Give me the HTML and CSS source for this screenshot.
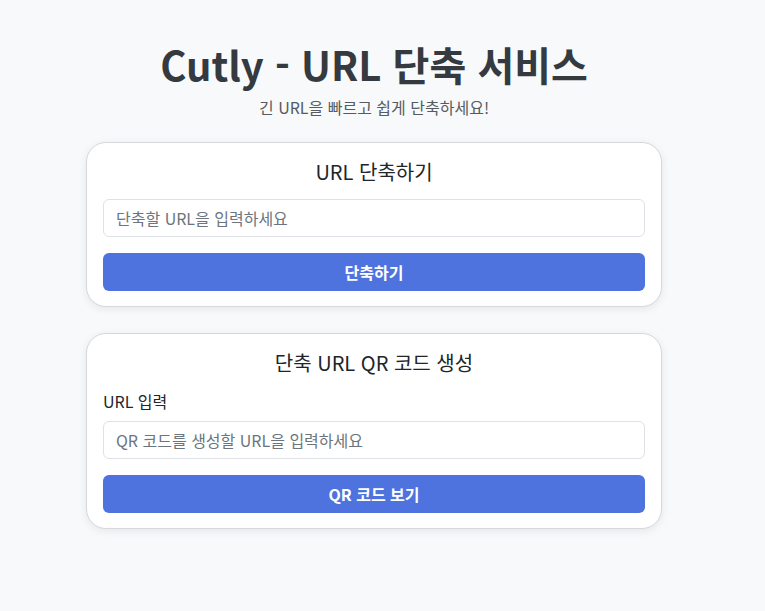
FILE: index.html
```html
<!DOCTYPE html>
<html lang="ko">
<head>
<meta charset="utf-8">
<title>Cutly - URL 단축 서비스</title>
<link rel="stylesheet" href="styles.css">
</head>
<body>
<div class="page">
  <main class="container">
    <header class="hero">
      <h1 class="title">Cutly - URL 단축 서비스</h1>
      <p class="subtitle">긴 URL을 빠르고 쉽게 단축하세요!</p>
    </header>

    <section class="card">
      <h2 class="card-title">URL 단축하기</h2>
      <input class="field" type="text" placeholder="단축할 URL을 입력하세요">
      <button class="btn" type="button">단축하기</button>
    </section>

    <section class="card">
      <h2 class="card-title">단축 URL QR 코드 생성</h2>
      <label class="label">URL 입력</label>
      <input class="field" type="text" placeholder="QR 코드를 생성할 URL을 입력하세요">
      <button class="btn" type="button">QR 코드 보기</button>
    </section>
  </main>
</div>
</body>
</html>
```

FILE: styles.css
```css
* { box-sizing: border-box; }

html, body {
  margin: 0;
  padding: 0;
  background: #f8f9fa;
}

body {
  font-family: "Noto Sans CJK KR", "Noto Sans", sans-serif;
  color: #212529;
}

.page {
  width: 748px;
}

.container {
  width: 576px;
  margin: 0 auto;
  padding-top: 36px;
  display: flex;
  flex-direction: column;
}

.hero {
  text-align: center;
}

.title {
  margin: 0;
  font-size: 40px;
  font-weight: 700;
  line-height: 56px;
  color: #343a40;
}

.subtitle {
  margin: 3px 0 23px;
  font-size: 16px;
  line-height: 24px;
  color: #555b61;
}

.card {
  background: #fff;
  border: 1px solid #d6d8db;
  border-radius: 20px;
  box-shadow: 0 2px 8px rgba(0, 0, 0, 0.08);
  padding: 16px 16px 15px;
  display: flex;
  flex-direction: column;
  margin-bottom: 26px;
}

.card-title {
  margin: 0 0 14px;
  text-align: center;
  font-size: 20px;
  font-weight: 400;
  line-height: 26px;
  color: #212529;
}

.label {
  font-size: 16px;
  line-height: 24px;
  margin: -1px 0 8px;
  color: #212529;
}

.field {
  height: 38px;
  padding: 0 12px;
  border: 1px solid #dee2e6;
  border-radius: 6px;
  font-family: inherit;
  font-size: 16px;
  color: #212529;
  background: #fff;
  margin-bottom: 16px;
}

.field::placeholder {
  color: #6c757d;
}

.btn {
  height: 38px;
  border: none;
  border-radius: 6px;
  background: #4e73df;
  color: #fff;
  font-family: inherit;
  font-size: 16px;
  font-weight: 700;
}
```
